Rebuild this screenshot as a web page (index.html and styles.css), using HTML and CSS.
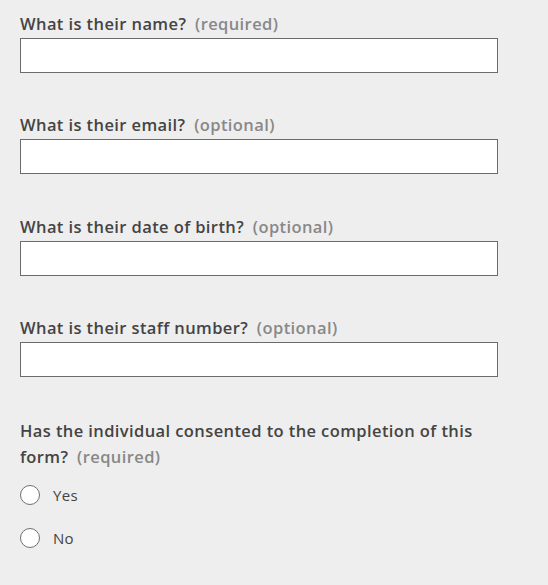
FILE: index.html
```html
<!DOCTYPE html>
<html lang="en">
<head>
<meta charset="utf-8">
<title>Form</title>
<link rel="stylesheet" href="styles.css">
</head>
<body>
<form class="form">
  <div class="field">
    <label class="label" for="name">What is their name? <span class="hint">(required)</span></label>
    <input class="input" id="name" type="text">
  </div>
  <div class="field">
    <label class="label" for="email">What is their email? <span class="hint">(optional)</span></label>
    <input class="input" id="email" type="text">
  </div>
  <div class="field">
    <label class="label" for="dob">What is their date of birth? <span class="hint">(optional)</span></label>
    <input class="input" id="dob" type="text">
  </div>
  <div class="field">
    <label class="label" for="staff">What is their staff number? <span class="hint">(optional)</span></label>
    <input class="input" id="staff" type="text">
  </div>
  <div class="field field-radio">
    <div class="label">Has the individual consented to the completion of this form? <span class="hint">(required)</span></div>
    <div class="radios">
      <label class="radio"><span class="circle"></span><span class="radio-text">Yes</span></label>
      <label class="radio"><span class="circle"></span><span class="radio-text">No</span></label>
    </div>
  </div>
</form>
</body>
</html>
```
FILE: styles.css
```css
html, body {
  margin: 0;
  padding: 0;
  background: #eeeeee;
}
body {
  font-family: "Open Sans", "Liberation Sans", sans-serif;
  color: #444444;
}
.form {
  width: 478px;
  padding: 11px 0 0 20px;
  display: flex;
  flex-direction: column;
  gap: 39.33px;
}
.field {
  display: flex;
  flex-direction: column;
}
.field-radio {
  margin-top: 2px;
}
.label {
  font-size: 16.5px;
  font-weight: 600;
  letter-spacing: 0.4px;
  line-height: 26px;
  margin-bottom: 1px;
}
.hint {
  color: #888888;
  margin-left: 4px;
}
.input {
  box-sizing: border-box;
  width: 478px;
  height: 35px;
  margin: 0;
  border: 1px solid #6b6b6b;
  background: #ffffff;
  border-radius: 0;
  padding: 0 8px;
}
.radios {
  display: flex;
  flex-direction: column;
  padding-top: 2px;
}
.radio {
  display: flex;
  align-items: center;
  height: 43px;
}
.circle {
  box-sizing: border-box;
  width: 20px;
  height: 20px;
  border: 1.5px solid #707070;
  border-radius: 50%;
  background: #ffffff;
}
.radio-text {
  font-size: 15px;
  letter-spacing: 0.3px;
  margin-left: 13px;
  color: #444444;
}
```
